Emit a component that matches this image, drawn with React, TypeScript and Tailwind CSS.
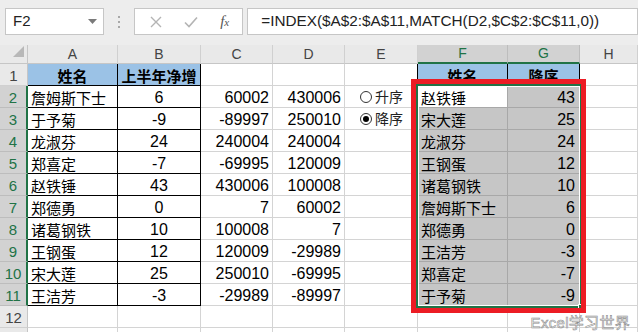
import React from "react";

const font = "font-['Liberation_Sans','Noto_Sans_CJK_SC',sans-serif]";

const letters = ["A", "B", "C", "D", "E", "F", "G", "H"];

// rows 2..11: name, net, C, D, sorted name, sorted value
const rows: [string, string, string, string, string, string][] = [
  ["詹姆斯下士", "6", "60002", "430006", "赵铁锤", "43"],
  ["于予菊", "-9", "-89997", "250010", "宋大莲", "25"],
  ["龙淑芬", "24", "240004", "240004", "龙淑芬", "24"],
  ["郑喜定", "-7", "-69995", "120009", "王钢蛋", "12"],
  ["赵铁锤", "43", "430006", "100008", "诸葛钢铁", "10"],
  ["郑德勇", "0", "7", "60002", "詹姆斯下士", "6"],
  ["诸葛钢铁", "10", "100008", "7", "郑德勇", "0"],
  ["王钢蛋", "12", "120009", "-29989", "王洁芳", "-3"],
  ["宋大莲", "25", "250010", "-69995", "郑喜定", "-7"],
  ["王洁芳", "-3", "-29989", "-89997", "于予菊", "-9"],
];

const plain = "border-r border-b border-r-[#d4d4d4] border-b-[#d4d4d4]";
const tableCell = "border-r border-b border-black flex items-end leading-[16px]";
const blue = "bg-[#9bc2e6] border-r border-b border-black flex items-end justify-center font-bold text-[15px] leading-[16px]";
const num = "flex items-end justify-end pr-[3px] pb-[1px] text-[16px] leading-[16px]";
const selCell = "bg-[#c6c6c6] border-r border-b border-r-[#a8a8a8] border-b-[#a8a8a8] flex items-end leading-[16px]";

function RowHead({ n, selected }: { n?: number; selected?: boolean }) {
  return (
    <div
      className={
        selected
          ? "bg-[#d2d2d2] text-[#217346] border-r-2 border-b border-r-[#217346] border-b-[#bdbdbd] flex items-end justify-center text-[15px] leading-[18px]"
          : "bg-[#e9e9e9] text-[#444] border-r border-b border-r-[#c6c6c6] border-b-[#d0d0d0] flex items-end justify-center text-[15px] leading-[18px]"
      }
    >
      {n}
    </div>
  );
}

function Radio({ checked, label }: { checked?: boolean; label: string }) {
  return (
    <div className={plain + " flex items-center pl-[15px] gap-[3px]"}>
      <span className="w-[12px] h-[12px] rounded-full border border-[#333] bg-white flex items-center justify-center">
        {checked && <span className="w-[6px] h-[6px] rounded-full bg-black" />}
      </span>
      <span className="text-[14px] leading-[16px] text-[#222]">{label}</span>
    </div>
  );
}

function Toolbar() {
  return (
    <div className="h-[45px] bg-[#ededed] flex items-start pt-[8px] pl-[5px]">
      <div className="w-[101px] h-[27px] bg-white border border-[#c6c6c6] flex items-center justify-between pl-[7px] pr-[6px]">
        <span className="text-[15px] text-[#222]">F2</span>
        <svg width="9" height="5" viewBox="0 0 9 5">
          <polygon points="0,0 9,0 4.5,5" fill="#7a7a7a" />
        </svg>
      </div>
      <div className="w-[31px] h-[27px] flex flex-col items-center justify-center gap-[3px]">
        <span className="w-[2px] h-[2px] bg-[#a8a8a8]" />
        <span className="w-[2px] h-[2px] bg-[#a8a8a8]" />
        <span className="w-[2px] h-[2px] bg-[#a8a8a8]" />
      </div>
      <div className="w-[109px] h-[27px] bg-white border border-[#c6c6c6] flex items-center">
        <div className="w-[39px] flex justify-center pl-[2px]">
          <svg width="12" height="12" viewBox="0 0 12 12">
            <path d="M1 1 L11 11 M11 1 L1 11" stroke="#b4b4b4" strokeWidth="1.4" />
          </svg>
        </div>
        <div className="w-[33px] flex justify-center">
          <svg width="14" height="12" viewBox="0 0 14 12">
            <path d="M1 6.5 L5 10.5 L13 1.5" stroke="#b4b4b4" strokeWidth="1.6" fill="none" />
          </svg>
        </div>
        <div className="w-[35px] flex justify-center">
          <span className="font-['Liberation_Serif',serif] italic text-[15px] text-[#555] leading-none">
            f<span className="text-[11px]">x</span>
          </span>
        </div>
      </div>
      <div className="ml-[4px] w-[400px] h-[27px] bg-white border border-[#c6c6c6] flex items-center pl-[13px]">
        <span className="text-[15.3px] text-[#222] whitespace-nowrap">
          =INDEX($A$2:$A$11,MATCH(D2,$C$2:$C$11,0))
        </span>
      </div>
    </div>
  );
}

export default function App() {
  return (
    <div className={"relative w-[638px] h-[332px] overflow-hidden bg-white text-black " + font}>
      <Toolbar />
      <div className="relative">
        <div className="grid grid-cols-[28px_90px_83px_72px_72px_73px_90px_72px_58px] grid-rows-[19px_repeat(13,22px)]">
          {/* column headers */}
          <div className="bg-[#e9e9e9] border-r border-b border-r-[#c6c6c6] border-b-[#c6c6c6] flex items-end justify-end pr-[3px] pb-[6px]">
            <svg width="11" height="11" viewBox="0 0 11 11">
              <polygon points="11,0 11,11 0,11" fill="#b8b8b8" />
            </svg>
          </div>
          {letters.map((l) =>
            l === "F" || l === "G" ? (
              <div
                key={l}
                className="bg-[#d2d2d2] text-[#217346] border-r border-b-2 border-r-[#bdbdbd] border-b-[#217346] flex items-center justify-center text-[14px]"
              >
                {l}
              </div>
            ) : (
              <div
                key={l}
                className="bg-[#e9e9e9] text-[#444] border-r border-b border-r-[#d0d0d0] border-b-[#c6c6c6] flex items-center justify-center text-[14px]"
              >
                {l}
              </div>
            )
          )}

          {/* row 1 */}
          <RowHead n={1} />
          <div className={blue}>姓名</div>
          <div className={blue}>上半年净增</div>
          <div className={plain} />
          <div className={plain} />
          <div className="border-r border-b border-r-black border-b-[#d4d4d4]" />
          <div className={blue}>姓名</div>
          <div className={blue}>降序</div>
          <div className={plain} />

          {/* rows 2..11 */}
          {rows.map((r, i) => (
            <React.Fragment key={i}>
              <RowHead n={i + 2} selected />
              <div className={tableCell + " pl-[3px] text-[15px]"}>{r[0]}</div>
              <div className={tableCell + " justify-center pb-[1px] text-[16px]"}>{r[1]}</div>
              <div className={plain + " " + num}>{r[2]}</div>
              <div className={plain + " " + num}>{r[3]}</div>
              {i === 0 ? (
                <Radio label="升序" />
              ) : i === 1 ? (
                <Radio label="降序" checked />
              ) : (
                <div className={plain} />
              )}
              <div
                className={
                  i === 0
                    ? "bg-white border-r border-b border-r-[#a8a8a8] border-b-[#a8a8a8] flex items-end leading-[16px] pl-[3px] text-[15px]"
                    : selCell + " pl-[3px] text-[15px]"
                }
              >
                {r[4]}
              </div>
              <div className={selCell + " justify-end pr-[4px] pb-[1px] text-[16px]"}>{r[5]}</div>
              <div className={plain} />
            </React.Fragment>
          ))}

          {/* row 12 and the top of row 13 */}
          <RowHead n={12} />
          {letters.map((l) => (
            <div key={"r12" + l} className={plain} />
          ))}
          <RowHead />
          {letters.map((l) => (
            <div key={"r13" + l} className={plain} />
          ))}
        </div>

        {/* selection F2:G11 */}
        <div className="absolute left-[416px] top-[39px] w-[166px] h-[224px] border-2 border-[#217346] shadow-[inset_0_0_0_1px_white] pointer-events-none">
          <div className="absolute -right-[5px] -bottom-[5px] w-[7px] h-[7px] bg-[#217346] border border-white" />
        </div>
        {/* red highlight frame */}
        <div className="absolute left-[411px] top-[34px] w-[175px] h-[234px] border-[5px] border-[#ec1c24] pointer-events-none" />
      </div>

      <div className="absolute right-[8px] bottom-[1px] text-[15px] leading-[17px] text-white [-webkit-text-stroke:0.6px_#8c8c8c] tracking-[0.3px]">
        Excel学习世界
      </div>
    </div>
  );
}
